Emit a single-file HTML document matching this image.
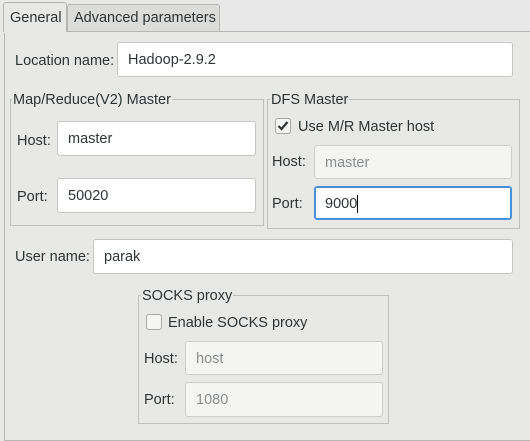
<!DOCTYPE html><html><head><style>
*{box-sizing:border-box;margin:0;padding:0}
body{width:530px;height:430px;background:#e8e8e8;font-family:"Liberation Sans",sans-serif;font-size:14.5px;color:#2e3436;position:relative;overflow:hidden;white-space:nowrap}
.a{position:absolute}
.l{margin-top:2px}
.panel{left:4px;top:31px;width:540px;height:410px;border:1px solid #b6b6b3;background:#e8e8e7}
.tab{top:2px;height:30px;border:1px solid #b6b6b3;border-bottom:none;border-radius:3px 3px 0 0;padding:7px 6px 0}
.in{background:#fff;border:1px solid #c5c5c3;border-radius:3px;padding-left:10px;display:flex;align-items:center;color:#2e3436;padding-top:1px}
.dis{background:#f4f4f3;border-color:#cfcfcd;color:#8b8e8f}
.grp{border:1px solid #c0c0bd}
.gt{background:#e8e8e7;padding:0 1px;line-height:16px}
.cb{width:16px;height:16px;border:1px solid #a8a8a6;border-radius:3px;background:#f5f5f4}
</style></head><body>
<div class="a panel"></div>
<div class="a tab" style="left:3px;width:64px;background:#e8e8e7;height:30px">General</div>
<div class="a tab" style="left:67px;width:153px;background:#dcdcdb;top:4px;height:27px;padding-top:5px">Advanced parameters</div>
<div class="a" style="left:4px;top:31px;width:62px;height:2px;background:#e8e8e7"></div>

<div class="a l" style="left:15px;top:51px">Location name:</div>
<div class="a in" style="left:117px;top:42px;width:396px;height:35px">Hadoop-2.9.2</div>

<div class="a grp" style="left:10px;top:99px;width:254px;height:127px"></div>
<div class="a gt" style="left:12px;top:92px">Map/Reduce(V2) Master</div>
<div class="a l" style="left:17px;top:131px">Host:</div>
<div class="a in" style="left:57px;top:121px;width:199px;height:35px">master</div>
<div class="a l" style="left:17px;top:187px">Port:</div>
<div class="a in" style="left:57px;top:178px;width:199px;height:35px">50020</div>

<div class="a grp" style="left:267px;top:99px;width:253px;height:130px"></div>
<div class="a gt" style="left:270px;top:92px">DFS Master</div>
<div class="a cb" style="left:275px;top:118px"><svg width="14" height="14" viewBox="0 0 14 14"><path d="M2.5 7 L5.5 10 L11.5 3" fill="none" stroke="#2e3436" stroke-width="2.2"/></svg></div>
<div class="a l" style="left:298px;top:117px">Use M/R Master host</div>
<div class="a l" style="left:272px;top:152px">Host:</div>
<div class="a in dis" style="left:314px;top:145px;width:198px;height:34px">master</div>
<div class="a l" style="left:272px;top:194px">Port:</div>
<div class="a in" style="left:314px;top:186px;width:198px;height:34px;border:1px solid #4a90d9;box-shadow:inset 0 0 0 1px #4a90d9">9000<span style="display:inline-block;width:1px;height:18px;background:#000"></span></div>

<div class="a l" style="left:15px;top:247px">User name:</div>
<div class="a in" style="left:93px;top:239px;width:420px;height:35px">parak</div>

<div class="a grp" style="left:138px;top:295px;width:251px;height:129px"></div>
<div class="a gt" style="left:141px;top:288px">SOCKS proxy</div>
<div class="a cb" style="left:146px;top:314px"></div>
<div class="a l" style="left:168px;top:313px">Enable SOCKS proxy</div>
<div class="a l" style="left:144px;top:349px">Host:</div>
<div class="a in dis" style="left:185px;top:341px;width:198px;height:34px">host</div>
<div class="a l" style="left:144px;top:390px">Port:</div>
<div class="a in dis" style="left:185px;top:382px;width:198px;height:35px">1080</div>
</body></html>
